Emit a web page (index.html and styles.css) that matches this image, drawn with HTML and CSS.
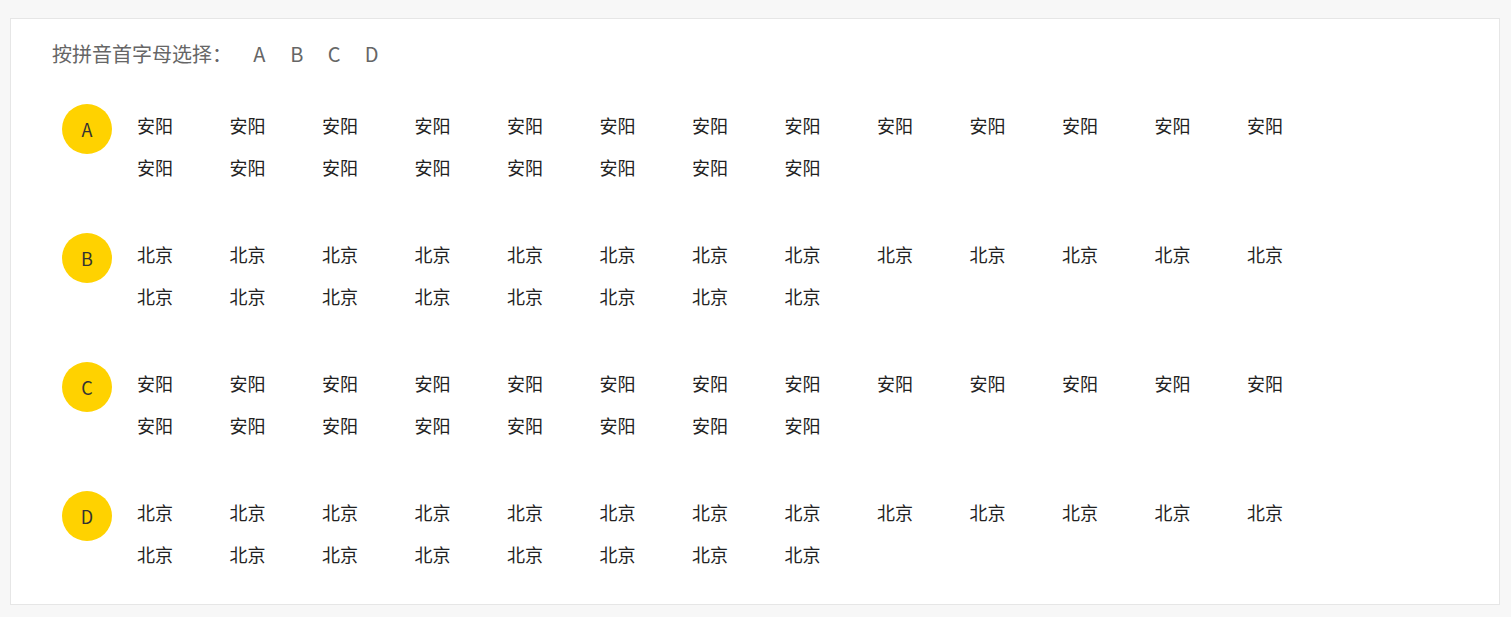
FILE: index.html
```html
<!DOCTYPE html>
<html lang="zh-CN">
<head>
<meta charset="utf-8">
<title>城市选择</title>
<link rel="stylesheet" href="styles.css">
</head>
<body>
<div class="card">
  <div class="header">
    <span class="header-label">按拼音首字母选择：</span>
    <span class="letters">
      <span class="letter">A</span><span class="letter">B</span><span class="letter">C</span><span class="letter">D</span>
    </span>
  </div>

  <div class="section">
    <div class="badge">A</div>
    <div class="cities">
      <span class="city">安阳</span><span class="city">安阳</span><span class="city">安阳</span><span class="city">安阳</span><span class="city">安阳</span><span class="city">安阳</span><span class="city">安阳</span><span class="city">安阳</span><span class="city">安阳</span><span class="city">安阳</span><span class="city">安阳</span><span class="city">安阳</span><span class="city">安阳</span>
      <span class="city">安阳</span><span class="city">安阳</span><span class="city">安阳</span><span class="city">安阳</span><span class="city">安阳</span><span class="city">安阳</span><span class="city">安阳</span><span class="city">安阳</span>
    </div>
  </div>

  <div class="section">
    <div class="badge">B</div>
    <div class="cities">
      <span class="city">北京</span><span class="city">北京</span><span class="city">北京</span><span class="city">北京</span><span class="city">北京</span><span class="city">北京</span><span class="city">北京</span><span class="city">北京</span><span class="city">北京</span><span class="city">北京</span><span class="city">北京</span><span class="city">北京</span><span class="city">北京</span>
      <span class="city">北京</span><span class="city">北京</span><span class="city">北京</span><span class="city">北京</span><span class="city">北京</span><span class="city">北京</span><span class="city">北京</span><span class="city">北京</span>
    </div>
  </div>

  <div class="section">
    <div class="badge">C</div>
    <div class="cities">
      <span class="city">安阳</span><span class="city">安阳</span><span class="city">安阳</span><span class="city">安阳</span><span class="city">安阳</span><span class="city">安阳</span><span class="city">安阳</span><span class="city">安阳</span><span class="city">安阳</span><span class="city">安阳</span><span class="city">安阳</span><span class="city">安阳</span><span class="city">安阳</span>
      <span class="city">安阳</span><span class="city">安阳</span><span class="city">安阳</span><span class="city">安阳</span><span class="city">安阳</span><span class="city">安阳</span><span class="city">安阳</span><span class="city">安阳</span>
    </div>
  </div>

  <div class="section">
    <div class="badge">D</div>
    <div class="cities">
      <span class="city">北京</span><span class="city">北京</span><span class="city">北京</span><span class="city">北京</span><span class="city">北京</span><span class="city">北京</span><span class="city">北京</span><span class="city">北京</span><span class="city">北京</span><span class="city">北京</span><span class="city">北京</span><span class="city">北京</span><span class="city">北京</span>
      <span class="city">北京</span><span class="city">北京</span><span class="city">北京</span><span class="city">北京</span><span class="city">北京</span><span class="city">北京</span><span class="city">北京</span><span class="city">北京</span>
    </div>
  </div>
</div>
</body>
</html>
```

FILE: styles.css
```css
* {
  box-sizing: border-box;
}

html, body {
  margin: 0;
  background: #f7f7f7;
}

body {
  padding: 18px 11px 0 10px;
  font-family: "Noto Sans CJK SC", "Noto Sans", sans-serif;
  font-size: 18px;
  color: #333;
}

.card {
  background: #fff;
  border: 1px solid #e6e6e6;
  padding: 17px 40px 29px 41px;
}

.header {
  display: flex;
  align-items: center;
  height: 36px;
  line-height: 34px;
  font-size: 20px;
  color: #666;
}

.header-label {
  white-space: nowrap;
}

.letters {
  display: flex;
  margin-left: 8.5px;
}

.letter {
  width: 37.5px;
  text-align: center;
  color: #666;
}

.section {
  display: flex;
  align-items: flex-start;
  margin-top: 45px;
}

.header + .section {
  margin-top: 32px;
}

.badge {
  flex: 0 0 50px;
  width: 50px;
  height: 50px;
  margin-left: 10px;
  margin-right: 25px;
  border-radius: 50%;
  background: #ffd200;
  color: #333;
  font-size: 18px;
  line-height: 50px;
  text-align: center;
}

.cities {
  display: grid;
  grid-template-columns: repeat(13, 92.5px);
  grid-auto-rows: 42px;
}

.city {
  line-height: 42px;
  color: #222;
  white-space: nowrap;
}
```
